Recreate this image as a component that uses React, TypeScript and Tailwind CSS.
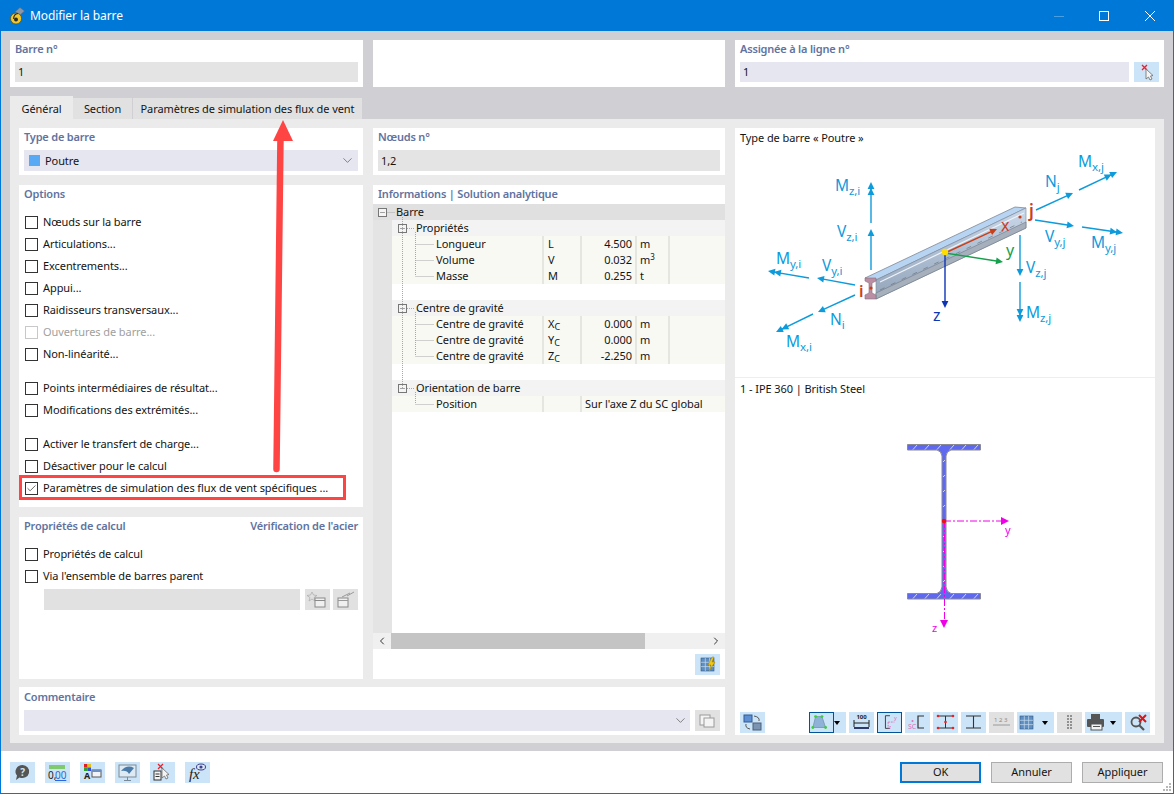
import type { ReactNode } from "react"
import { ChevronDown, Check, Minus, ChevronLeft, ChevronRight } from "lucide-react"

const BLUE = "#0d9bdc"

function Arrow({ x1, y1, x2, y2, color = BLUE, double = false, w = 1.4 }: { x1: number; y1: number; x2: number; y2: number; color?: string; double?: boolean; w?: number }) {
  const a = Math.atan2(y2 - y1, x2 - x1)
  const head = (d: number) => {
    const tx = x2 - Math.cos(a) * d
    const ty = y2 - Math.sin(a) * d
    const bx = tx - Math.cos(a) * 7
    const by = ty - Math.sin(a) * 7
    const nx = -Math.sin(a) * 3.4
    const ny = Math.cos(a) * 3.4
    return `${tx},${ty} ${bx + nx},${by + ny} ${bx - nx},${by - ny}`
  }
  return (
    <g>
      <line x1={x1} y1={y1} x2={x2 - Math.cos(a) * 5} y2={y2 - Math.sin(a) * 5} stroke={color} strokeWidth={w} />
      <polygon points={head(0)} fill={color} />
      {double && <polygon points={head(6)} fill={color} />}
    </g>
  )
}

function Lbl({ x, y, t, s }: { x: number; y: number; t: string; s?: string }) {
  return (
    <text x={x - 1} y={y} fill={BLUE} fontSize="15.5">
      {t}
      {s && <tspan dy="4" fontSize="11.5">{s}</tspan>}
    </text>
  )
}

function BeamDiagram() {
  return (
    <svg className="block" width="420" height="232" viewBox="735 145 420 232">
      <defs>
        <linearGradient id="web" x1="0" y1="0" x2="0" y2="1">
          <stop offset="0" stopColor="#c9d8ea" />
          <stop offset="1" stopColor="#93a4ba" />
        </linearGradient>
      </defs>
      <polygon points="865,278 1015,207 1026,208 876,280" fill="#b7d4f2" stroke="#7d8796" strokeWidth="0.8" />
      <polygon points="876,280 1026,208 1026,228 876,299" fill="url(#web)" stroke="#7d8796" strokeWidth="0.6" />
      <polygon points="876,293 1026,222 1026,228 876,299" fill="#a6b0bd" stroke="#6e7886" strokeWidth="0.6" />
      <line x1="880" y1="282" x2="1024" y2="213" stroke="#eef3f9" strokeWidth="1.2" />
      <line x1="880" y1="290" x2="1022" y2="222" stroke="#6c7582" strokeWidth="0.7" strokeDasharray="5 7" />
      <path d="M865,278 L876,278 L876,281 L872,283 L872,293 L876,295 L876,299 L865,299 L865,295 L869,293 L869,283 L865,281 Z" fill="#bb8ea4" stroke="#84707c" strokeWidth="0.6" />
      <circle cx="871" cy="288" r="1.6" fill="#c8401a" />
      <circle cx="1020" cy="217" r="1.6" fill="#c8401a" />

      <Arrow x1={871} y1={223} x2={871} y2={182} double />
      <Arrow x1={871} y1={270} x2={871} y2={229} />
      <Arrow x1={809} y1={278} x2={768} y2={271} double />
      <Arrow x1={855} y1={285} x2={817} y2={278} />
      <Arrow x1={855} y1={295} x2={818} y2={312} />
      <Arrow x1={813} y1={314} x2={776} y2={332} double />
      <Arrow x1={1036} y1={210} x2={1073} y2={193} />
      <Arrow x1={1079} y1={190} x2={1117} y2={172} double />
      <Arrow x1={1035} y1={220} x2={1074} y2={226} />
      <Arrow x1={1082} y1={227} x2={1123} y2={233} double />
      <Arrow x1={1020} y1={235} x2={1020} y2={276} />
      <Arrow x1={1020} y1={282} x2={1020} y2={322} double />

      <Arrow x1={945} y1={253} x2={945} y2={308} color="#0f35b5" />
      <Arrow x1={945} y1={253} x2={1003} y2={262} color="#16a04c" />
      <Arrow x1={945} y1={253} x2={997} y2={229} color="#c8401a" />
      <circle cx="945" cy="252" r="3.2" fill="#ffdd00" />

      <Lbl x={836} y={191} t="M" s="z,i" />
      <Lbl x={838} y={237} t="V" s="z,i" />
      <Lbl x={777} y={264} t="M" s="y,i" />
      <Lbl x={823} y={271} t="V" s="y,i" />
      <Lbl x={831} y={325} t="N" s="i" />
      <Lbl x={787} y={347} t="M" s="x,i" />
      <Lbl x={1046} y={187} t="N" s="j" />
      <Lbl x={1079} y={167} t="M" s="x,j" />
      <Lbl x={1046} y={242} t="V" s="y,j" />
      <Lbl x={1092} y={248} t="M" s="y,j" />
      <Lbl x={1027} y={273} t="V" s="z,j" />
      <Lbl x={1027} y={318} t="M" s="z,j" />
      <text x={859} y={297} fill="#c8401a" fontSize="16" fontWeight="600">i</text>
      <text x={1029} y={217} fill="#c8401a" fontSize="17" fontWeight="600">j</text>
      <text x={933} y={321} fill="#0f35b5" fontSize="16">z</text>
      <text x={1006} y={256} fill="#16a04c" fontSize="16">y</text>
      <text x={1001} y={231} fill="#c8401a" fontSize="16">x</text>
    </svg>
  )
}

function SectionDrawing() {
  const flangeHatch = [913, 925, 937, 950, 962, 974]
  const webHatch = [460, 475, 490, 505, 520, 535, 550, 565, 580]
  return (
    <svg className="block" width="420" height="316" viewBox="735 396 420 316">
      <path
        d="M907.5,444.5 H980.5 V450 H951 Q946.5,451 946,456 V587 Q946.5,592 951,593.5 H980.5 V599 H907.5 V593.5 H937 Q941.5,592 942,587 V456 Q941.5,451 937,450 H907.5 Z"
        fill="#5f69f0"
        stroke="#8a8a92"
        strokeWidth="1"
      />
      {flangeHatch.map((x) => (
        <g key={x} stroke="#e8ecff" strokeWidth="0.8">
          <line x1={x} y1={449.5} x2={x + 4} y2={445} />
          <line x1={x} y1={598.5} x2={x + 4} y2={594} />
        </g>
      ))}
      {webHatch.map((y) => (
        <line key={y} x1={943} y1={y + 2} x2={945} y2={y} stroke="#e8ecff" strokeWidth="0.8" />
      ))}
      <line x1={944} y1={521} x2={1002} y2={521} stroke="#f000e8" strokeWidth="1" strokeDasharray="7 2 2 2" />
      <polygon points="1009,521 1001,517 1001,525" fill="#f000e8" />
      <line x1={944.5} y1={521} x2={944.5} y2={622} stroke="#f000e8" strokeWidth="1" strokeDasharray="7 2 2 2" />
      <polygon points="944,628 940,620 948,620" fill="#f000e8" />
      <circle cx="944" cy="521" r="2.2" fill="#f01010" />
      <text x={1005} y={534} fill="#f000e8" fontSize="11">y</text>
      <text x={932} y={632} fill="#f000e8" fontSize="11">z</text>
    </svg>
  )
}

function Panel({ className = "", title, right, children }: { className?: string; title?: string; right?: string; children?: ReactNode }) {
  return (
    <div className={`bg-white px-[5px] ${className}`}>
      {title && (
        <div className="flex h-[22px] items-center justify-between pb-[4px] font-semibold tracking-[-0.2px] text-[#6173a0]">
          <span>{title}</span>
          {right && <span>{right}</span>}
        </div>
      )}
      {children}
    </div>
  )
}

function Box({ checked, disabled }: { checked?: boolean; disabled?: boolean }) {
  return (
    <span className={`flex h-[13px] w-[13px] shrink-0 items-center justify-center border bg-white ${disabled ? "border-[#c8c8c8]" : "border-[#333333]"}`}>
      {checked && <Check size={13} strokeWidth={1.6} className="text-[#333333]" />}
    </span>
  )
}

function Opt({ label, checked, disabled, boxed }: { label: string; checked?: boolean; disabled?: boolean; boxed?: boolean }) {
  return (
    <div className={`relative flex h-[22px] items-center gap-[5px] pl-[1px] ${disabled ? "text-[#a0a0a0]" : "text-[#141414]"}`}>
      <Box checked={checked} disabled={disabled} />
      <span className="whitespace-nowrap">{label}</span>
      {boxed && <div className="absolute left-[-5px] top-[-2px] h-[25px] w-[327px] border-[3px] border-[#ff4444]" />}
    </div>
  )
}

function TB({ children, wide, gray, active, className = "" }: { children?: ReactNode; wide?: boolean; gray?: boolean; active?: boolean; className?: string }) {
  return (
    <div className={`relative flex h-[21px] shrink-0 items-center ${wide ? "w-[37px]" : "w-[25px]"} ${gray ? "bg-[#e1e1e1]" : "bg-[#cce4f7]"} ${className}`}>
      <div className={`h-[21px] w-[25px] shrink-0 ${active ? "border border-[#005499]" : ""}`}>
        <svg width={active ? 23 : 25} height={active ? 19 : 21} viewBox="0 0 25 21" className="block">
          {children}
        </svg>
      </div>
      {wide && <div className="h-0 w-0 border-x-[3.5px] border-t-[4px] border-x-transparent border-t-black" />}
    </div>
  )
}

type Row =
  | { kind: "blank" }
  | { kind: "group"; label: string }
  | { kind: "leaf"; label: string; sym?: ReactNode; val?: string; unit?: ReactNode; wide?: string }

const cSub = (c: string) => (
  <span>
    {c}
    <span className="relative top-[2px] text-[9px]">C</span>
  </span>
)

const rows: Row[] = [
  { kind: "group", label: "Propriétés" },
  { kind: "leaf", label: "Longueur", sym: "L", val: "4.500", unit: "m" },
  { kind: "leaf", label: "Volume", sym: "V", val: "0.032", unit: <span>m<sup className="text-[8px]">3</sup></span> },
  { kind: "leaf", label: "Masse", sym: "M", val: "0.255", unit: "t" },
  { kind: "blank" },
  { kind: "group", label: "Centre de gravité" },
  { kind: "leaf", label: "Centre de gravité", sym: cSub("X"), val: "0.000", unit: "m" },
  { kind: "leaf", label: "Centre de gravité", sym: cSub("Y"), val: "0.000", unit: "m" },
  { kind: "leaf", label: "Centre de gravité", sym: cSub("Z"), val: "-2.250", unit: "m" },
  { kind: "blank" },
  { kind: "group", label: "Orientation de barre" },
  { kind: "leaf", label: "Position", wide: "Sur l'axe Z du SC global" },
]

function Toggle() {
  return (
    <span className="flex h-[9px] w-[9px] shrink-0 items-center justify-center border border-[#777777] bg-[#f4f4f4]">
      <Minus size={7} strokeWidth={1.5} className="text-[#333333]" />
    </span>
  )
}

function InfoTree() {
  return (
    <div className="relative h-[429px] bg-[#e4e4e4]">
      <div className="flex h-4 items-center bg-[#e0e0e0] pl-[5px]">
        <Toggle />
        <span className="ml-[9px]">Barre</span>
      </div>
      <div className="ml-[19px] h-[413px] bg-white">
        {rows.map((r, i) => {
          if (r.kind === "blank") return <div key={i} className="h-4" />
          if (r.kind === "group")
            return (
              <div key={i} className="flex h-4 items-center bg-[#f3f3f3] pl-[6px]">
                <Toggle />
                <span className="ml-[9px]">{r.label}</span>
              </div>
            )
          return (
            <div key={i} className="flex h-4 items-center bg-[#f8f9f3]">
              <div className="w-[150px] shrink-0 pl-[44px]">{r.label}</div>
              <div className="h-4 w-[38px] shrink-0 border-l-2 border-[#e6e6e0] pl-[4px]">{r.sym}</div>
              {r.wide ? (
                <div className="h-4 border-l-2 border-[#e6e6e0] pl-[3px] whitespace-nowrap">{r.wide}</div>
              ) : (
                <>
                  <div className="h-4 w-[55px] shrink-0 border-l-2 border-[#e6e6e0] pr-[3px] text-right">{r.val}</div>
                  <div className="h-4 w-[33px] shrink-0 border-l-2 border-[#e6e6e0] pl-[3px] leading-4">{r.unit}</div>
                  <div className="h-4 border-l-2 border-[#e6e6e0]" />
                </>
              )}
            </div>
          )
        })}
      </div>
      {/* tree connector lines */}
      <svg className="absolute left-0 top-0" width="80" height="210">
        <g stroke="#a8a8a8" strokeWidth="1" strokeDasharray="1 1" fill="none">
          <path d="M14.5,8.5 H22" />
          <path d="M29.5,13 V184" />
          <path d="M34,24.5 H42 M34,104.5 H42 M34,184.5 H42" />
          <path d="M42.5,28 V72 M42.5,40.5 H61 M42.5,56.5 H61 M42.5,72.5 H61" />
          <path d="M42.5,108 V152 M42.5,120.5 H61 M42.5,136.5 H61 M42.5,152.5 H61" />
          <path d="M42.5,188 V200 M42.5,200.5 H61" />
        </g>
      </svg>
    </div>
  )
}

function GridGlyph({ x = 6 }: { x?: number }) {
  return (
    <g transform={`translate(${x - 6} 0)`}>
      <rect x="6" y="4" width="13" height="13" fill="#5d8fc4" stroke="#33567a" strokeWidth="0.6" />
      <path d="M6,8.3 H19 M6,12.6 H19 M10.3,4 V17 M14.6,4 V17" stroke="#c9dcee" strokeWidth="0.7" />
    </g>
  )
}

export default function App() {
  const tabs = [
    { label: "Section", w: "w-[60px]" },
    { label: "Paramètres de simulation des flux de vent", w: "w-[230px]" },
  ]
  return (
    <div className="relative flex h-[794px] w-[1174px] flex-col overflow-hidden border border-[#0078d7] bg-[#d0cfd4] font-['Noto_Sans',sans-serif] text-[11px] leading-4 tracking-[-0.08px] text-[#141414]">
      {/* title bar */}
      <div className="flex h-[30px] shrink-0 items-center bg-[#0078d7] pl-[8px] text-[12px] text-white">
        <svg width="16" height="18" viewBox="0 0 16 18">
          <path d="M6,5 L11,0.5 L15.5,4 L11,8 Z" fill="#8a97a8" stroke="#5f6b7a" strokeWidth="0.5" />
          <circle cx="7" cy="11.5" r="5.5" fill="#f1c92c" stroke="#5b4a08" strokeWidth="0.7" />
          <circle cx="7" cy="12.5" r="2" fill="#2b2b2b" />
          <path d="M9,6.5 Q4.6,7 4.6,12" stroke="#2b2b2b" strokeWidth="1.2" fill="none" />
        </svg>
        <span className="ml-[5px]">Modifier la barre</span>
        <div className="ml-auto flex items-center">
          <div className="mr-[35px] h-px w-[10px] bg-[#4a9fe2]" />
          <div className="mr-[36px] h-[10px] w-[10px] border border-white" />
          <svg className="mr-[18px]" width="10" height="10" viewBox="0 0 10 10">
            <path d="M0,0 L10,10 M10,0 L0,10" stroke="white" strokeWidth="1" />
          </svg>
        </div>
      </div>

      {/* header fields */}
      <div className="flex shrink-0 gap-[10px] px-[9px] pt-[9px]">
        <Panel title="Barre n°" className="h-[47px] w-[353px]">
          <div className="flex h-5 items-center bg-[#e4e4e4] pl-[3px]">1</div>
        </Panel>
        <div className="h-[47px] w-[352px] bg-white" />
        <Panel title="Assignée à la ligne n°" className="h-[47px] w-[429px]">
          <div className="flex gap-[5px]">
            <div className="flex h-5 w-[389px] items-center bg-[#e6e6f0] pl-[3px]">1</div>
            <div className="h-5 w-[25px] bg-[#cce4f7]">
              <svg width="25" height="20" viewBox="0 0 25 20">
                <path d="M8,3 L13,8 M13,3 L8,8" stroke="#e8202a" strokeWidth="1.3" />
                <path d="M12,7 L12,17 L14.5,15 L16,18 L18,17 L16.5,14 L19,13.5 Z" fill="#f4f4f4" stroke="#6a6a6a" strokeWidth="0.8" />
              </svg>
            </div>
          </div>
        </Panel>
      </div>

      {/* tabs */}
      <div className="mt-[10px] flex h-[22px] shrink-0 items-end pl-[9px]">
        <div className="z-10 flex h-[23px] w-[63px] items-center justify-center bg-[#ebebeb] pt-[3px]">Général</div>
        {tabs.map((t) => (
          <div key={t.label} className={`flex h-[21px] items-center justify-center whitespace-nowrap border-r border-[#d0cfd4] bg-[#e1e1e1] pt-[1px] ${t.w}`}>
            {t.label}
          </div>
        ))}
      </div>

      {/* main content */}
      <div className="mx-[9px] flex h-[624px] shrink-0 gap-[10px] bg-[#ebebeb] px-[9px] pb-[8px] pt-[9px]">
        <div className="flex w-[706px] flex-col gap-[8px]">
          <div className="flex gap-[10px]">
            <div className="flex w-[344px] flex-col gap-[10px]">
              <Panel title="Type de barre" className="h-[47px]">
                <div className="flex h-[21px] items-center bg-[#e6e6f0] pl-[5px] pr-[3px]">
                  <span className="h-[11px] w-[11px] bg-[#5aa9f5]" />
                  <span className="ml-[5px]">Poutre</span>
                  <ChevronDown size={15} strokeWidth={1} className="ml-auto text-[#444444]" />
                </div>
              </Panel>
              <Panel title="Options" className="h-[322px] pt-0">
                <div className="mt-[4px]">
                  {["Nœuds sur la barre", "Articulations...", "Excentrements...", "Appui...", "Raidisseurs transversaux..."].map((o) => (
                    <Opt key={o} label={o} />
                  ))}
                  <Opt label="Ouvertures de barre..." disabled />
                  <Opt label="Non-linéarité..." />
                  <div className="h-[12px]" />
                  <Opt label="Points intermédiaires de résultat..." />
                  <Opt label="Modifications des extrémités..." />
                  <div className="h-[12px]" />
                  <Opt label="Activer le transfert de charge..." />
                  <Opt label="Désactiver pour le calcul" />
                  <Opt label="Paramètres de simulation des flux de vent spécifiques ..." checked boxed />
                </div>
              </Panel>
              <Panel title="Propriétés de calcul" right="Vérification de l'acier" className="h-[162px]">
                <div className="mt-[4px]">
                  <Opt label="Propriétés de calcul" />
                  <Opt label="Via l'ensemble de barres parent" />
                </div>
                <div className="mt-[2px] flex gap-[3px] pl-[20px]">
                  <div className="h-[21px] w-[256px] bg-[#e1e1e1]" />
                  <div className="ml-[2px] h-[21px] w-[25px] bg-[#e1e1e1]">
                    <svg width="25" height="21" viewBox="0 0 25 21">
                      <path d="M7,3 L8.5,6 L12,6.5 L9,8.5 L10,12 L7,10 L4,12 L5,8.5 L2,6.5 L5.5,6 Z" fill="none" stroke="#b0b0b0" strokeWidth="0.8" />
                      <rect x="10" y="9" width="10" height="9" fill="#f0f0f0" stroke="#8a8a8a" />
                      <path d="M10,11.5 H20" stroke="#8a8a8a" />
                    </svg>
                  </div>
                  <div className="h-[21px] w-[25px] bg-[#e1e1e1]">
                    <svg width="25" height="21" viewBox="0 0 25 21">
                      <rect x="5" y="9" width="10" height="9" fill="#f0f0f0" stroke="#8a8a8a" />
                      <path d="M5,11.5 H15 M9,8 L17,4 M14,7 L21,3" stroke="#9a9a9a" />
                    </svg>
                  </div>
                </div>
              </Panel>
            </div>

            <div className="flex w-[352px] flex-col gap-[10px]">
              <Panel title="Nœuds n°" className="h-[47px]">
                <div className="flex h-[21px] items-center bg-[#e4e4e4] pl-[3px]">1,2</div>
              </Panel>
              <div className="flex h-[494px] flex-col bg-white">
                <div className="flex h-[19px] items-center pb-[2px] pl-[5px] font-semibold tracking-[-0.2px] text-[#6173a0]">Informations | Solution analytique</div>
                <InfoTree />
                <div className="flex h-4 items-center justify-between bg-[#f0f0f0]">
                  <ChevronLeft size={12} strokeWidth={2} className="ml-[3px] text-[#333333]" />
                  <div className="absolute left-[390px] h-4 w-[254px] bg-[#c4c4c4]" />
                  <ChevronRight size={12} strokeWidth={2} className="mr-[3px] text-[#333333]" />
                </div>
                <div className="flex flex-1 items-center justify-end pr-[5px]">
                  <TB>
                    <GridGlyph />
                    <path d="M17,3 L13,11 H16 L14,17 L20,8 H17 L19,3 Z" fill="#f2c713" stroke="#8a6d00" strokeWidth="0.4" />
                  </TB>
                </div>
              </div>
            </div>
          </div>

          <Panel title="Commentaire" className="h-[48px] pt-[1px]">
            <div className="flex gap-[5px]">
              <div className="flex h-[21px] w-[666px] items-center justify-end bg-[#e6e6f0] pr-[2px]">
                <ChevronDown size={15} strokeWidth={1} className="text-[#444444]" />
              </div>
              <div className="h-[21px] w-[25px] bg-[#e1e1e1]">
                <svg width="25" height="21" viewBox="0 0 25 21">
                  <rect x="5" y="5" width="10" height="10" fill="#f4f4f4" stroke="#9a9a9a" />
                  <rect x="9" y="8" width="10" height="9" fill="#f4f4f4" stroke="#9a9a9a" />
                </svg>
              </div>
            </div>
          </Panel>
        </div>

        <div className="flex w-[420px] flex-col bg-white">
          <div className="h-[17px] shrink-0 pl-[5px] pt-[2px]">Type de barre « Poutre »</div>
          <BeamDiagram />
          <div className="h-px bg-[#eeeeee]" />
          <div className="h-[18px] shrink-0 pl-[5px] pt-[3px]">1 - IPE 360 | British Steel</div>
          <SectionDrawing />
          <div className="flex gap-[3px] px-[5px]">
            <TB className="mr-[41px]">
              <rect x="4" y="3" width="8" height="7" fill="#5e8fd2" stroke="#2f5a96" />
              <rect x="13" y="11" width="8" height="7" fill="#7b94b2" stroke="#4b6078" />
              <path d="M14,4 Q20,5 19,9 M10,17 Q5,16 6,12" stroke="#555555" fill="none" />
            </TB>
            <TB wide active>
              <polygon points="6,4 13,4 17,16 3,16" fill="#8fb3d6" stroke="#7a9ab8" />
              <g fill="#3ecb3e">
                <circle cx="6" cy="4" r="1.6" />
                <circle cx="13" cy="4" r="1.6" />
                <circle cx="17" cy="16" r="1.6" />
                <circle cx="3" cy="16" r="1.6" />
              </g>
            </TB>
            <TB>
              <text x="12.5" y="6.5" fontSize="6" fontWeight="700" textAnchor="middle" fill="#222222">100</text>
              <path d="M5,8 V15 M20,8 V15 M5,11 H20" stroke="#222222" fill="none" />
              <rect x="5" y="15" width="15" height="2" fill="#2d3a6a" />
            </TB>
            <TB active>
              <path d="M13,3 H8 V17 H13" stroke="#333333" fill="none" />
              <path d="M11,10 H18 M11,10 V17" stroke="#e070b8" fill="none" strokeDasharray="2 1" />
              <text x="17.5" y="8" fontSize="6" fill="#e070b8">y</text>
              <text x="12" y="18" fontSize="5" fill="#e070b8">z</text>
            </TB>
            <TB>
              <circle cx="7.5" cy="9" r="1" fill="#e070b8" />
              <text x="3" y="17" fontSize="7" fill="#e070b8">SC</text>
              <path d="M19,4 H13 V16 H19" stroke="#333333" fill="none" strokeWidth="1.2" />
            </TB>
            <TB>
              <path d="M5,4 H20 M5,16 H20 M12.5,4 V16" stroke="#333333" />
              <g fill="#ee2020">
                <circle cx="5" cy="4" r="1.3" />
                <circle cx="20" cy="4" r="1.3" />
                <circle cx="5" cy="16" r="1.3" />
                <circle cx="20" cy="16" r="1.3" />
                <circle cx="12.5" cy="10" r="1.3" />
              </g>
            </TB>
            <TB>
              <path d="M5,4 H20 M5,16 H20 M12.5,4 V16" stroke="#333333" strokeWidth="1.1" />
            </TB>
            <TB gray>
              <text x="12.5" y="10" fontSize="6" textAnchor="middle" fill="#8a8a8a" letterSpacing="1.5">123</text>
              <path d="M4,13 H21" stroke="#9a9a9a" />
            </TB>
            <TB wide>
              <GridGlyph x={3} />
            </TB>
            <TB gray>
              <path d="M10,4 H15 M10,7 H15 M10,10 H15 M10,13 H15 M10,16 H15" stroke="#777777" strokeWidth="1.3" strokeDasharray="2 1" />
            </TB>
            <TB wide>
              <rect x="6" y="2" width="9" height="5" fill="#555555" />
              <rect x="2" y="7" width="17" height="8" rx="1" fill="#555555" />
              <rect x="6" y="12" width="11" height="6" fill="#f4f4f4" stroke="#555555" />
              <path d="M8,14.5 H15" stroke="#555555" />
            </TB>
            <TB>
              <circle cx="11" cy="10" r="4.5" fill="none" stroke="#555555" strokeWidth="1.8" />
              <path d="M14,13 L19,18" stroke="#555555" strokeWidth="2.2" />
              <path d="M14,3 L21,10 M21,3 L14,10" stroke="#e01414" strokeWidth="2" />
            </TB>
          </div>
        </div>
      </div>

      {/* footer */}
      <div className="mt-[8px] flex flex-1 items-center gap-[10px] bg-white pl-[9px] pr-[10px]">
        <TB>
          <path d="M12.5,3 a7,6.5 0 1 1 -3,12.5 L6,18 L7,13.5 A7,6.5 0 0 1 12.5,3 Z" fill="#555555" />
          <text x="12.5" y="13.5" fontSize="10" fontWeight="700" textAnchor="middle" fill="#cce4f7">?</text>
        </TB>
        <TB>
          <rect x="4" y="3" width="16" height="4" fill="#7fc96f" />
          <text x="3" y="17" fontSize="10" fill="#222222">0,</text>
          <text x="10" y="17" fontSize="10" fill="#2a6ad8" textDecoration="underline">00</text>
        </TB>
        <TB>
          <rect x="4" y="2" width="3.5" height="3.5" fill="#e02020" />
          <rect x="7.5" y="2" width="3.5" height="3.5" fill="#e0c020" />
          <rect x="4" y="5.5" width="3.5" height="3.5" fill="#30a030" />
          <rect x="7.5" y="5.5" width="3.5" height="3.5" fill="#3050d0" />
          <text x="4" y="17" fontSize="9" fontWeight="700" fill="#222222">A</text>
          <rect x="12" y="8" width="9" height="7" fill="#f0f4fa" stroke="#555555" />
          <rect x="12" y="8" width="9" height="2" fill="#6a8fc0" />
        </TB>
        <TB>
          <rect x="4" y="3" width="17" height="12" fill="#dde9f3" stroke="#7a8a98" />
          <path d="M6,9 Q12,2 19,6 L14,12 Q12,8 6,9 Z" fill="#4a7ba8" />
          <path d="M12.5,15 V18 M9,18.5 H16" stroke="#7a8a98" />
        </TB>
        <TB>
          <path d="M8,2 L13,7 M13,2 L8,7" stroke="#e8202a" strokeWidth="1.2" />
          <rect x="4" y="9" width="7" height="9" fill="#f4f4f4" stroke="#333333" />
          <path d="M5.5,12 H9.5 M5.5,14.5 H9.5" stroke="#333333" />
          <path d="M12,6 L12,16 L14.5,14 L16,17 L18,16 L16.5,13 L19,12.5 Z" fill="#f4f4f4" stroke="#6a6a6a" strokeWidth="0.8" />
        </TB>
        <TB>
          <text x="4" y="17" fontSize="15" fontStyle="italic" fontFamily="Liberation Serif, serif" fill="#222222">fx</text>
          <ellipse cx="16" cy="5" rx="4.5" ry="3" fill="#dbe6f5" stroke="#3a3f8c" />
          <circle cx="16" cy="5" r="1.6" fill="#3a3f8c" />
        </TB>
        <div className="ml-auto flex gap-[10px]">
          <div className="flex h-[21px] w-[81px] items-center justify-center border-2 border-[#0078d7] bg-[#e1e1e1]">OK</div>
          <div className="flex h-[21px] w-[81px] items-center justify-center border border-[#adadad] bg-[#e1e1e1]">Annuler</div>
          <div className="flex h-[21px] w-[81px] items-center justify-center border border-[#adadad] bg-[#e1e1e1]">Appliquer</div>
        </div>
        <svg className="absolute bottom-[1px] right-[1px]" width="9" height="9" viewBox="0 0 9 9">
          <g fill="#b8b8b8">
            <rect x="6" y="0" width="2" height="2" />
            <rect x="3" y="3" width="2" height="2" />
            <rect x="6" y="3" width="2" height="2" />
            <rect x="0" y="6" width="2" height="2" />
            <rect x="3" y="6" width="2" height="2" />
            <rect x="6" y="6" width="2" height="2" />
          </g>
        </svg>
      </div>

      {/* annotation arrow */}
      <svg className="pointer-events-none absolute left-[-1px] top-[-1px]" width="1174" height="794" viewBox="0 0 1174 794">
        <path d="M276.5,469 L280.5,136" stroke="#ff4444" strokeWidth="6.5" strokeLinecap="round" fill="none" />
        <polygon points="283,120 293,141 273,141" fill="#ff4444" />
      </svg>
    </div>
  )
}
